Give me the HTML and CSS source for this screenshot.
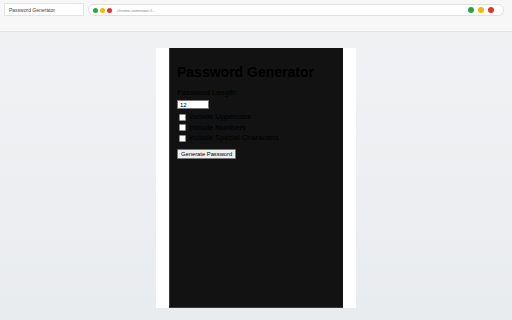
FILE: index.html
```html
<!DOCTYPE html>
<html lang="en">
<head>
  <meta charset="UTF-8">
  <title>Password Generator</title>
  <link rel="stylesheet" href="styles.css">
</head>
<body>
<div class="toolbar">
  <div class="tab">Password Generator</div>
  <div class="address">
    <span class="dot green"></span>
    <span class="dot yellow"></span>
    <span class="dot red"></span>
    <span class="url">chrome-extension://...</span>
    <span class="spacer"></span>
    <span class="dot big green"></span>
    <span class="dot big yellow"></span>
    <span class="dot big red"></span>
  </div>
</div>

<div class="stage">
  <div class="popup">
    <div class="app">
      <h1>Password Generator</h1>
      <label class="field-label" for="length">Password Length:</label>
      <input class="length" id="length" type="number" value="12">
      <label class="option"><input type="checkbox"> Include Uppercase</label>
      <label class="option"><input type="checkbox"> Include Numbers</label>
      <label class="option"><input type="checkbox"> Include Special Characters</label>
      <button class="generate">Generate Password</button>
    </div>
  </div>
</div>
</body>
</html>
```

FILE: styles.css
```css
* {
  margin: 0;
  padding: 0;
  box-sizing: border-box;
}
html, body {
  width: 100%;
  height: 100%;
}
body {
  font-family: "Liberation Sans", Arial, sans-serif;
  background: linear-gradient(#f1f2f4, #e9ecef);
  display: flex;
  flex-direction: column;
}

/* browser chrome */
.toolbar {
  height: 32px;
  background: #f7f7f8;
  border-bottom: 1px solid #e2e3e6;
  display: flex;
  align-items: flex-start;
  padding: 3px 8px 0 4px;
  gap: 4px;
}
.tab {
  width: 80px;
  height: 13px;
  background: #fff;
  border: 1px solid #e4e4e6;
  font-size: 5px;
  color: #444;
  padding: 3px 0 0 4px;
}
.address {
  flex: 1;
  height: 12px;
  margin-top: 1px;
  background: #fff;
  border: 1px solid #e0e0e3;
  border-radius: 6px;
  display: flex;
  align-items: center;
  padding: 0 9px 0 4px;
  gap: 2px;
}
.dot {
  width: 5px;
  height: 5px;
  border-radius: 50%;
}
.dot.big {
  width: 6px;
  height: 6px;
  margin-left: 2px;
}
.green { background: #27a745; }
.yellow { background: #f5b800; }
.red { background: #e5322d; }
.url {
  font-size: 4px;
  color: #888;
  margin-left: 3px;
}
.spacer {
  flex: 1;
}

/* page */
.stage {
  flex: 1;
  display: flex;
  justify-content: center;
  padding-top: 16px;
}
.popup {
  width: 200px;
  height: 260px;
  background: #fff;
  padding: 0 13px;
}
.app {
  height: 100%;
  background: #121212;
  border-left: 1px solid #3a3a3a;
  border-bottom: 1px solid #3a3a3a;
  padding: 16px 7px;
  display: flex;
  flex-direction: column;
  align-items: flex-start;
  color: #000;
}
h1 {
  font-size: 14px;
  line-height: 16px;
  font-weight: bold;
  margin-bottom: 9px;
}
.field-label {
  font-size: 7.5px;
  line-height: 8px;
  margin-bottom: 3px;
}
.length {
  width: 32px;
  height: 9px;
  font-size: 6px;
  font-family: "Liberation Sans", Arial, sans-serif;
  border: 1px solid #767676;
  background: #fff;
  color: #000;
  padding: 0 2px;
  margin-bottom: 3px;
  appearance: textfield;
}
.option {
  font-size: 7.5px;
  line-height: 10px;
  height: 10.5px;
  display: flex;
  align-items: center;
  gap: 3px;
  padding-left: 2px;
}
.option input {
  appearance: none;
  width: 7px;
  height: 7px;
  margin: 0;
  background: #fff;
  border: 1px solid #8a8a8a;
  border-radius: 1px;
}
.generate {
  margin-top: 5px;
  height: 10px;
  padding: 0 3px;
  font-size: 5.8px;
  font-family: "Liberation Sans", Arial, sans-serif;
  background: #efefef;
  border: 1px solid #767676;
  border-radius: 1px;
  color: #000;
}
```
